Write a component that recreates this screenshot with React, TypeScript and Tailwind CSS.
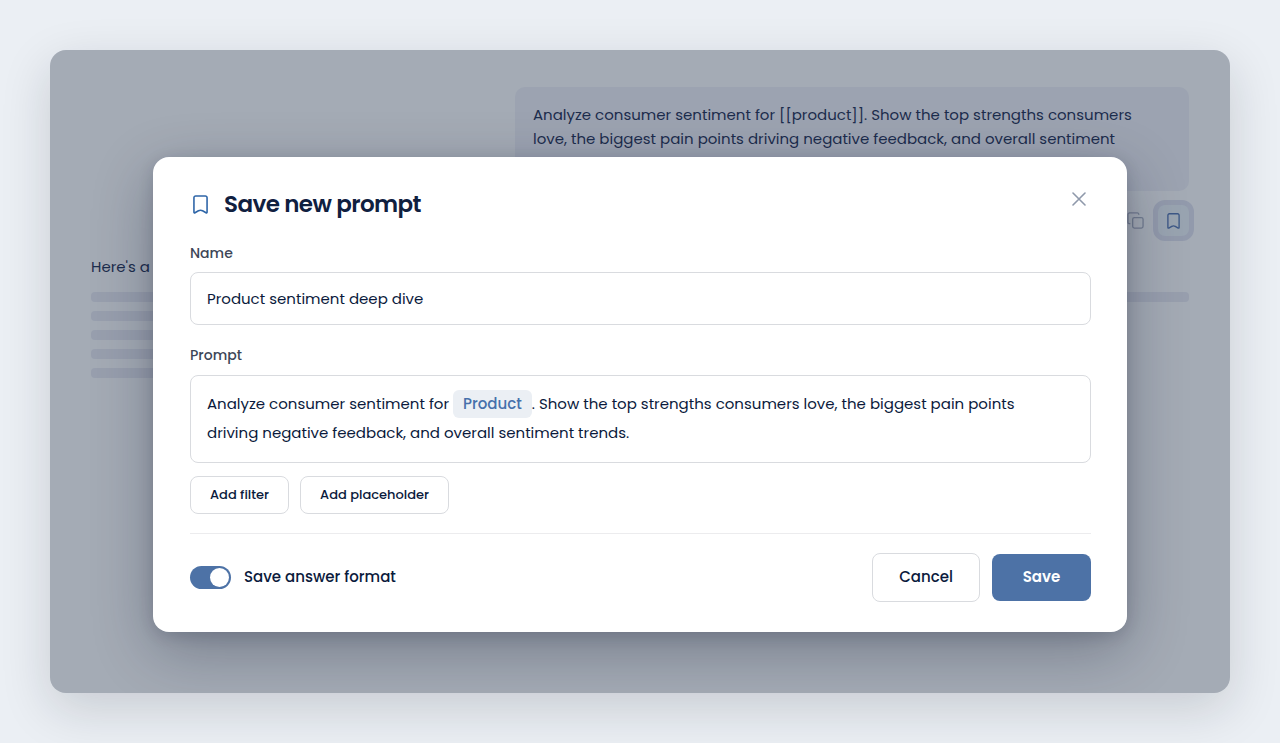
import { useState } from 'react';

const FONT = "font-[Poppins,Inter,'Open_Sans',sans-serif]";

function BookmarkIcon({ className }: { className?: string }) {
  return (
    <svg viewBox="0 0 16 20" fill="none" stroke="currentColor" strokeLinejoin="round" strokeLinecap="round" className={className}>
      <path d="M2.8 1h10.4A1.8 1.8 0 0 1 15 2.8v15.4c0 .7-.5 1-1.1.6l-3.7-2.1a4.4 4.4 0 0 0-4.4 0l-3.7 2.1c-.6.4-1.1.1-1.1-.6V2.8A1.8 1.8 0 0 1 2.8 1z" strokeWidth="1.7" />
    </svg>
  );
}

function CopyIcon({ className }: { className?: string }) {
  return (
    <svg viewBox="0 0 18 18" fill="none" stroke="currentColor" strokeWidth="1.4" strokeLinecap="round" className={className}>
      <rect x="6" y="6" width="11" height="11" rx="1.8" />
      <path d="M3 12.4h-.5A1.5 1.5 0 0 1 1 11V2.8A1.8 1.8 0 0 1 2.8 1H11a1.5 1.5 0 0 1 1.5 1.5" />
    </svg>
  );
}

function CloseIcon() {
  return (
    <svg viewBox="0 0 14 14" fill="none" stroke="currentColor" strokeWidth="1.6" strokeLinecap="round" className="size-3.5">
      <path d="M1 1l12 12M13 1L1 13" />
    </svg>
  );
}

function Conversation() {
  return (
    <div className="px-[41px] pt-[37px] text-[15px] leading-6 text-[#1c2d4d]">
      {/* User message */}
      <div className="ml-auto w-[674px] max-w-full rounded-[10px] bg-[#9ca3b1] px-[18px] py-4">
        <p>
          Analyze consumer sentiment for [[product]]. Show the top strengths consumers
          <br />
          love, the biggest pain points driving negative feedback, and overall sentiment
          <br />
          trends.
        </p>
      </div>
      <div className="mt-[9px] -mr-[5px] flex items-center justify-end gap-[9px]">
        <button type="button" aria-label="Copy" className="text-[#737d91]">
          <CopyIcon className="size-[17px]" />
        </button>
        <button type="button" aria-label="Save prompt" className="flex size-[41px] items-center justify-center rounded-xl border-[5px] border-[#929aac] bg-[#99a4b1] text-[#3d5887]">
          <BookmarkIcon className="h-4 w-[13px]" />
        </button>
      </div>

      {/* Answer */}
      <p className="mt-[14px]">Here's a</p>
      <div className="mt-[13px] flex flex-col gap-[9px]">
        <div className="h-[10px] rounded bg-[#989fae]" />
        <div className="h-[10px] w-3/4 rounded bg-[#989fae]" />
        <div className="h-[10px] w-4/5 rounded bg-[#989fae]" />
        <div className="h-[10px] w-3/4 rounded bg-[#989fae]" />
        <div className="h-[10px] w-1/2 rounded bg-[#989fae]" />
      </div>
    </div>
  );
}

function SavePromptDialog() {
  const [name, setName] = useState('Product sentiment deep dive');
  const [keepFormat, setKeepFormat] = useState(true);

  return (
    <form
      role="dialog"
      aria-labelledby="dialog-title"
      onSubmit={(e) => e.preventDefault()}
      className="w-full rounded-[16px] bg-white pr-9 pl-[37px] pt-[31px] pb-[30px] text-[#0b1a3c] shadow-[0_18px_60px_rgba(10,15,40,0.3),0_4px_16px_rgba(10,15,40,0.14)]"
    >
      <div className="flex items-start justify-between">
        <div className="flex items-center gap-4">
          <BookmarkIcon className="ml-[3px] h-[19px] w-[15px] text-[#2f66a8]" />
          <h2 id="dialog-title" className="text-[23px] leading-8 font-semibold tracking-tight text-[#10203f]">Save new prompt</h2>
        </div>
        <button type="button" aria-label="Close" className="mr-[5px] mt-1 text-[#8f99ab]">
          <CloseIcon />
        </button>
      </div>

      <label htmlFor="prompt-name" className="mt-[23px] block text-sm leading-5 font-medium text-[#3d4657]">Name</label>
      <input
        id="prompt-name"
        type="text"
        value={name}
        onChange={(e) => setName(e.target.value)}
        className="mt-[9px] block h-[53px] w-full rounded-lg border border-[#d9dbdf] bg-white px-4 text-[15px]"
      />

      <div id="prompt-label" className="mt-5 text-sm leading-5 font-medium text-[#3d4657]">Prompt</div>
      <div
        role="textbox"
        aria-multiline="true"
        aria-labelledby="prompt-label"
        contentEditable
        suppressContentEditableWarning
        className="mt-[10px] rounded-lg border border-[#d9dbdf] px-4 pt-[13px] pb-[15px] text-[15px] leading-[29px]"
      >
        Analyze consumer sentiment for{' '}
        <span className="inline-block rounded-md bg-[#ebeff4] px-2.5 leading-7 font-medium text-[#4670ab]">Product</span>
        . Show the top strengths consumers love, the biggest pain points
        <br />
        driving negative feedback, and overall sentiment trends.
      </div>

      <div className="mt-[13px] flex gap-[11px]">
        <button type="button" className="h-[38px] rounded-lg border border-[#d9dbdf] px-[19px] text-[13px] font-medium">Add filter</button>
        <button type="button" className="h-[38px] rounded-lg border border-[#d9dbdf] px-[19px] text-[13px] font-medium">Add placeholder</button>
      </div>

      <div className="mt-[19px] flex items-center justify-between border-t border-[#ececee] pt-[19px]">
        <label className="flex items-center gap-[13px] text-[15px] font-medium">
          <input
            type="checkbox"
            role="switch"
            checked={keepFormat}
            onChange={(e) => setKeepFormat(e.target.checked)}
            className="h-[23px] w-[41px] appearance-none rounded-full bg-[#a4abb5] p-0.5 before:block before:size-[19px] before:rounded-full before:bg-white checked:bg-[#4d72a6] checked:before:ml-auto"
          />
          Save answer format
        </label>
        <div className="flex items-center gap-3">
          <button type="button" className="h-[49px] w-[108px] rounded-lg border border-[#d9dbdf] text-[15px] font-medium">Cancel</button>
          <button type="submit" className="h-[47px] w-[99px] rounded-lg bg-[#4d72a6] text-[15px] font-semibold text-white">Save</button>
        </div>
      </div>
    </form>
  );
}

export default function App() {
  return (
    <div className={`flex min-h-screen bg-[#ebeff4] p-[50px] ${FONT}`}>
      <div className="relative flex-1 overflow-hidden rounded-[16px] bg-[#a4abb5] shadow-[0_16px_50px_rgba(20,25,35,0.16)]">
        <Conversation />
        <div className="absolute inset-0 flex items-start px-[103px] pt-[107px]">
          <SavePromptDialog />
        </div>
      </div>
    </div>
  );
}
